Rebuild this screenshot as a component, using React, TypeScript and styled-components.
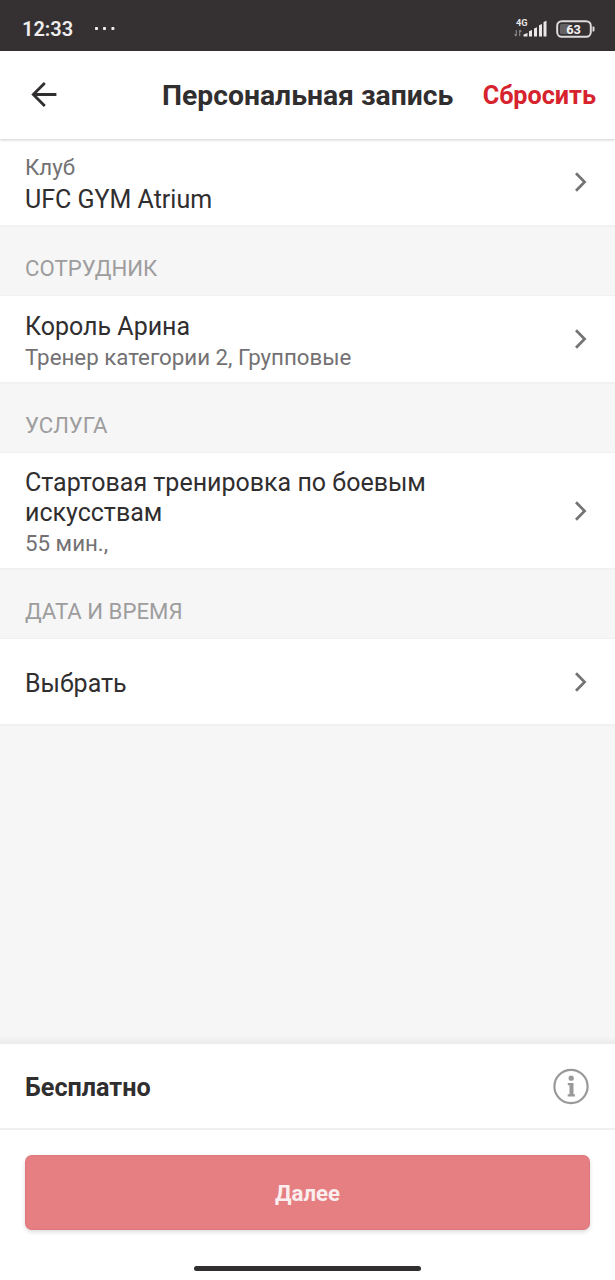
import React from "react";
import styled, { createGlobalStyle } from "styled-components";

const GlobalStyle = createGlobalStyle`
  *, *::before, *::after { box-sizing: border-box; }
  body { margin: 0; background: #f6f6f6; font-family: Roboto, "Noto Sans", sans-serif; color: #302e2f; }
  button { font: inherit; border: 0; background: none; padding: 0; cursor: pointer; }
`;

const Screen = styled.div`
  width: 100%;
  height: 1280px;
  display: flex;
  flex-direction: column;
  overflow: hidden;
`;

const StatusBar = styled.div`
  flex: none;
  height: 51px;
  padding: 6px 20px 0 22px;
  background: #353132;
  color: #efedee;
  display: flex;
  align-items: center;
`;

const Clock = styled.span`
  font-size: 20px;
  font-weight: 600;
  line-height: 24px;
  margin-right: 21px;
`;

const StatusIcons = styled.div`
  margin-left: auto;
  display: flex;
  align-items: center;
  gap: 8px;
`;

const Header = styled.header`
  flex: none;
  height: 88px;
  padding: 0 19px 0 30px;
  background: #fff;
  display: flex;
  align-items: center;
  position: relative;
  box-shadow: 0 1px 3px rgba(0, 0, 0, 0.2);
`;

const BackButton = styled.button`
  display: flex;
  width: 28px;
  height: 28px;
  margin-right: 104px;
  color: #302e2f;
`;

const Title = styled.h1`
  margin: 2px 0 0;
  font-size: 28.3px;
  font-weight: 700;
  line-height: 34px;
  white-space: nowrap;
`;

const ResetButton = styled.button`
  && {
    margin: 2px 0 0 auto;
    color: #d6232d;
    font-size: 25.2px;
    font-weight: 700;
    line-height: 30px;
    white-space: nowrap;
  }
`;

const Row = styled.div<{ $height: number }>`
  flex: none;
  height: ${(p) => p.$height}px;
  padding: 0 27px 0 25px;
  background: #fff;
  display: flex;
  align-items: center;
  justify-content: space-between;
`;

const RowText = styled.div<{ $offset: number; $gap?: number }>`
  max-width: 430px;
  padding-top: ${(p) => p.$offset * 2}px;
  display: flex;
  flex-direction: column;
  gap: ${(p) => p.$gap ?? 0}px;
`;

const Primary = styled.span`
  font-size: 25px;
  line-height: 30px;
`;

const Secondary = styled.span`
  font-size: 22.3px;
  line-height: 30px;
  color: #737173;
`;

const SectionTitle = styled.h2`
  flex: none;
  height: 71px;
  margin: 0;
  padding: 26px 25px 0;
  border-top: 2px solid #f1f1f1;
  border-bottom: 1px solid #f1f1f1;
  font-size: 22.2px;
  font-weight: 400;
  line-height: 30px;
  color: #9e9d9e;
`;

const Filler = styled.div`
  flex: 1;
  border-top: 2px solid #f1f1f1;
  background: linear-gradient(to bottom, #f6f6f6 calc(100% - 8px), #ebebeb);
`;

const Price = styled.div`
  flex: none;
  height: 86px;
  padding: 0 26px 0 25px;
  background: #fff;
  border-bottom: 2px solid #f0f0f0;
  display: flex;
  align-items: center;
  justify-content: space-between;
`;

const PriceValue = styled.span`
  padding-top: 3px;
  font-size: 25.2px;
  font-weight: 700;
  line-height: 30px;
`;

const Footer = styled.footer`
  flex: none;
  height: 150px;
  padding: 25px 25px 9px;
  background: #fff;
  display: flex;
  flex-direction: column;
  align-items: center;
  justify-content: space-between;
`;

const NextButton = styled.button`
  && {
    width: 100%;
    height: 75px;
    padding-top: 1px;
    border-radius: 7px;
    background: #e67f82;
    box-shadow: 0 2px 4px rgba(0, 0, 0, 0.14), inset 0 0 1px 1px rgba(210, 110, 125, 0.4);
    color: #fbeeee;
    font-size: 22.2px;
    font-weight: 700;
  }
`;

const HomeIndicator = styled.div`
  width: 227px;
  height: 5px;
  border-radius: 3px;
  background: #302e2f;
`;

const Chevron = () => (
  <svg width="14" height="22" viewBox="0 0 14 22" fill="none" stroke="#757375" strokeWidth="2.7">
    <path d="M2 2.2 10.6 11 2 19.8" />
  </svg>
);

const Dots = () => (
  <svg width="22" height="4" viewBox="0 0 22 4" fill="#efedee">
    <rect x="1" y="0" width="3" height="3" rx="0.8" />
    <rect x="9" y="0" width="3" height="3" rx="0.8" />
    <rect x="17.4" y="0" width="3" height="3" rx="0.8" />
  </svg>
);

const Signal = () => (
  <svg width="34" height="28" viewBox="0 -4 34 28" fill="#e8e6e7">
    <text x="2" y="7.4" fontSize="9.2" fontWeight="700" fontFamily="Roboto, sans-serif">4G</text>
    <path d="M2.3 11v6M.6 15.2l1.7 2M5.7 17v-6M7.4 12.8l-1.7-2" stroke="#8d8a8b" strokeWidth="1.1" fill="none" />
    <path d="M9.5 17.5v-2l4-1.5v3.5zM15 17.5v-5.2l3-1.3v6.5zM20 17.5V9.6l3-1.4v9.3zM25 17.5V6.3l3-1.3v12.5zM29.5 17.5V3l3-1.2v15.7z" />
  </svg>
);

const Battery = () => (
  <svg width="39" height="18" viewBox="0 0 39 18">
    <rect x="1.2" y="1.2" width="33.6" height="15.6" rx="4.6" fill="none" stroke="#dcdadb" strokeWidth="2" />
    <rect x="4" y="4" width="10" height="10" rx="1.5" fill="#656162" />
    <path d="M36.5 6.5h1a1 1 0 0 1 1 1v3a1 1 0 0 1-1 1h-1z" fill="#dcdadb" />
    <text x="17.5" y="13.6" textAnchor="middle" fontSize="12.8" fontWeight="700" fontFamily="Roboto, sans-serif" fill="#f4f2f3">63</text>
  </svg>
);

const BackArrow = () => (
  <svg width="28" height="28" viewBox="0 0 28 28" fill="none" stroke="currentColor" strokeWidth="2.8">
    <path d="M26.4 13.5H3.5M14.8 2 3.3 13.5 14.8 25" />
  </svg>
);

const InfoIcon = () => (
  <svg width="36" height="37" viewBox="0 -0.5 36 37" fill="#9a999a">
    <circle cx="18" cy="18" r="16.6" fill="none" stroke="#9a999a" strokeWidth="2.2" />
    <circle cx="18.2" cy="9.7" r="2.6" />
    <path d="M14.8 14.4h5.7v11.3h1.4v2.4h-7.2v-2.4h1.8v-8.9h-1.7z" />
  </svg>
);

export default function App() {
  return (
    <Screen>
      <GlobalStyle />
      <StatusBar>
        <Clock>12:33</Clock>
        <Dots />
        <StatusIcons>
          <Signal />
          <Battery />
        </StatusIcons>
      </StatusBar>
      <Header>
        <BackButton aria-label="Назад"><BackArrow /></BackButton>
        <Title>Персональная запись</Title>
        <ResetButton>Сбросить</ResetButton>
      </Header>
      <Row $height={86}>
        <RowText $offset={1} $gap={3}>
          <Secondary>Клуб</Secondary>
          <Primary>UFC GYM Atrium</Primary>
        </RowText>
        <Chevron />
      </Row>
      <SectionTitle>СОТРУДНИК</SectionTitle>
      <Row $height={86}>
        <RowText $offset={3}>
          <Primary>Король Арина</Primary>
          <Secondary>Тренер категории 2, Групповые</Secondary>
        </RowText>
        <Chevron />
      </Row>
      <SectionTitle>УСЛУГА</SectionTitle>
      <Row $height={115}>
        <RowText $offset={2}>
          <Primary>Стартовая тренировка по боевым искусствам</Primary>
          <Secondary>55 мин.,</Secondary>
        </RowText>
        <Chevron />
      </Row>
      <SectionTitle>ДАТА И ВРЕМЯ</SectionTitle>
      <Row $height={85}>
        <RowText $offset={2}>
          <Primary>Выбрать</Primary>
        </RowText>
        <Chevron />
      </Row>
      <Filler />
      <Price>
        <PriceValue>Бесплатно</PriceValue>
        <InfoIcon />
      </Price>
      <Footer>
        <NextButton>Далее</NextButton>
        <HomeIndicator />
      </Footer>
    </Screen>
  );
}
